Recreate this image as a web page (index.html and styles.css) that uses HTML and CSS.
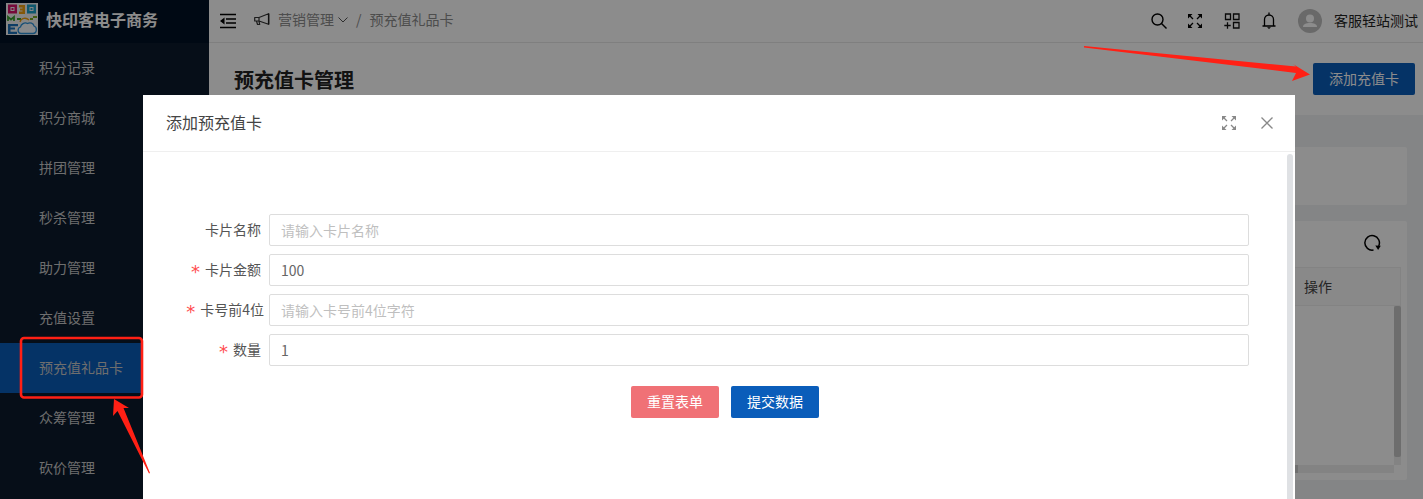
FILE: index.html
```html
<!DOCTYPE html>
<html lang="zh-CN">
<head>
<meta charset="utf-8">
<title>预充值卡管理</title>
<link rel="stylesheet" href="styles.css">
</head>
<body>
<div class="app">
  <aside class="sidebar">
    <div class="brand">
      <svg class="logo" viewBox="0 0 32 32">
        <rect width="32" height="32" fill="#f4f4f4"/>
        <path d="M2 1.500h9v9H2zM4.500 4v4h4V4z" fill="#d8126a" fill-rule="evenodd"/>
        <rect x="5.500" y="5" width="2" height="2" fill="#d8126a"/>
        <path d="M13 2h6v9h-6V8.500h3.500v-1H14V5.500h2.500v-1H13z" fill="#f0a010"/>
        <path d="M21 1.500h9v9h-9zM23.500 4v4h4V4z" fill="#1aa0c8" fill-rule="evenodd"/>
        <rect x="24.500" y="5" width="2" height="2" fill="#1aa0c8"/>
        <path d="M2 18v-4l3 2.500L8 14v4M11 16h4" fill="none" stroke="#3aa030" stroke-width="1.800"/>
        <path d="M24 16h3M27 14h4" fill="none" stroke="#7aa820" stroke-width="1.800"/>
        <path d="M2 21h10v2.200H4.500V24.500H9v2H4.500v2.300H11V31H2z" fill="#1a70b8"/>
        <path d="M15 30.500c-3.500 0-4-5.500-.5-6.500 .5-3 4-5 7-3.500 2.500-1.500 6-.5 6.500 2.500 3.500 1 3 7.500-1 7.500z" fill="#f8fbff" stroke="#2a90d8" stroke-width="1.300"/>
        <path d="M14 19c1-4 6-5 9-2" fill="none" stroke="#f0a010" stroke-width="1.300"/>
      </svg>
      <span class="brand-name">快印客电子商务</span>
    </div>
    <nav class="menu">
      <a class="menu-item">积分记录</a>
      <a class="menu-item">积分商城</a>
      <a class="menu-item">拼团管理</a>
      <a class="menu-item">秒杀管理</a>
      <a class="menu-item">助力管理</a>
      <a class="menu-item">充值设置</a>
      <a class="menu-item active">预充值礼品卡</a>
      <a class="menu-item">众筹管理</a>
      <a class="menu-item">砍价管理</a>
    </nav>
  </aside>
  <div class="main">
    <header class="topbar">
      <svg class="ic ic-fold" viewBox="0 0 16 16"><path d="M0 1.500h16M6 6h10M6 10h10M0 14.500h16" stroke="#000" stroke-width="1.400" fill="none"/><path d="M4.500 4.500v7L0 8z" fill="#000"/></svg>
      <svg class="ic ic-horn" viewBox="0 0 16 14"><path d="M.7 4.500h4.300L14.500.8v10.400L5 8H.7zM5 4.500V8M2.500 8l1 3.500h2.200L5 8.300" fill="none" stroke="#333" stroke-width="1.200" stroke-linejoin="round"/><path d="M14.700.5v11" stroke="#222" stroke-width="1.400"/></svg>
      <span class="crumb">营销管理</span>
      <svg class="ic-chev" viewBox="0 0 10 6"><path d="M.5.5 5 5 9.500.5" fill="none" stroke="#555" stroke-width="1"/></svg>
      <span class="crumb-sep">/</span>
      <span class="crumb">预充值礼品卡</span>
      <div class="top-actions">
        <svg class="ic ic-search" viewBox="0 0 16 16"><circle cx="6.500" cy="6.500" r="5.500" fill="none" stroke="#000" stroke-width="1.400"/><path d="m10.500 10.500 5 5" stroke="#000" stroke-width="1.400"/></svg>
        <svg class="ic ic-full" viewBox="0 0 14 14"><path d="M5 5 2 2M9 5l3-3M5 9l-3 3M9 9l3 3" stroke="#000" stroke-width="1.300" fill="none"/><path d="M0 0h4.500L0 4.500zM14 0H9.500L14 4.500zM0 14h4.500L0 9.500zM14 14H9.500L14 9.500z" fill="#000"/></svg>
        <svg class="ic ic-apps" viewBox="0 0 16 16"><path d="M1.500 1h5v5.500h-5zM9.500 1H15v5.500H9.500zM9.500 9.500H15V15H9.500zM.3 12.500h6.400M3.500 9.300v6.400" fill="none" stroke="#111" stroke-width="1.300"/></svg>
        <svg class="ic ic-bell" viewBox="0 0 14 17"><path d="M.5 14h13M2.500 14V7.500a4.500 4.500 0 0 1 9 0V14M7 3V.5" fill="none" stroke="#000" stroke-width="1.300"/><path d="M5 15.200h4L7 17z" fill="#000"/></svg>
        <svg class="avatar" viewBox="0 0 24 24"><circle cx="12" cy="12" r="12" fill="#bfbfbf"/><circle cx="12" cy="9.500" r="4" fill="#fff"/><path d="M5 18c0-3 3-4 7-4s7 1 7 4z" fill="#fff"/></svg>
        <span class="user">客服轻站测试</span>
      </div>
    </header>
    <section class="page-head">
      <h1 class="page-title">预充值卡管理</h1>
      <button class="btn btn-primary btn-add">添加充值卡</button>
    </section>
    <section class="content">
      <div class="card card-filter"></div>
      <div class="card card-table">
        <div class="table-tools">
          <svg class="ic ic-refresh" viewBox="0 0 18 18"><path d="M10.500 16A7.300 7.300 0 1 1 15.700 12" fill="none" stroke="#000" stroke-width="1.500"/><path d="m12.300 11.500 5.500 .2-2.700 4.300z" fill="#000"/></svg>
        </div>
        <div class="table-wrap">
          <div class="thead"><span class="th">操作</span></div>
          <div class="tbody"><div class="vscroll"><div class="vthumb"></div></div></div>
          <div class="hscroll"><div class="hthumb"></div></div>
        </div>
      </div>
    </section>
  </div>
</div>

<div class="mask"></div>

<div class="modal">
  <div class="modal-head">
    <span class="modal-title">添加预充值卡</span>
    <svg class="modal-ic ic-expand" viewBox="0 0 14 14"><path d="M5 5 2 2M9 5l3-3M5 9l-3 3M9 9l3 3" stroke="#888" stroke-width="1.300" fill="none"/><path d="M0 0h4.500L0 4.500zM14 0H9.500L14 4.500zM0 14h4.500L0 9.500zM14 14H9.500L14 9.500z" fill="#888"/></svg>
    <svg class="modal-ic ic-close" viewBox="0 0 12 12"><path d="M.5.500l11 11M11.500.500l-11 11" stroke="#888" stroke-width="1.300"/></svg>
  </div>
  <div class="modal-body">
    <form class="form">
      <div class="row">
        <label class="label">卡片名称</label>
        <input class="input" placeholder="请输入卡片名称">
      </div>
      <div class="row">
        <label class="label"><i class="req">*</i>卡片金额</label>
        <input class="input" value="100">
      </div>
      <div class="row">
        <label class="label label-wide"><i class="req">*</i>卡号前4位</label>
        <input class="input" placeholder="请输入卡号前4位字符">
      </div>
      <div class="row">
        <label class="label"><i class="req">*</i>数量</label>
        <input class="input" value="1">
      </div>
      <div class="form-actions">
        <button type="button" class="btn btn-reset">重置表单</button>
        <button type="button" class="btn btn-submit">提交数据</button>
      </div>
    </form>
    <div class="modal-scroll"></div>
  </div>
</div>

<svg class="annot" viewBox="0 0 1423 499">
  <path d="M1084 46 1296 66.500 1293 64 1310 74.500 1292 81 1296 73 1084 47.500Z" fill="#ff2015"/>
  <rect x="21" y="338" width="121" height="59.500" rx="3" fill="none" stroke="#ff2015" stroke-width="2.600"/>
  <path d="M114 399 129 408 123.500 408 150 473 149 473.500 117.500 411 113 416Z" fill="#ff2015"/>
</svg>
</body>
</html>
```
FILE: styles.css
```css
* { box-sizing: border-box; }
html, body { margin: 0; height: 100%; overflow: hidden; }
body {
  font-family: "Noto Sans CJK SC", "Liberation Sans", sans-serif;
  font-size: 14px;
  color: #333;
  background: #f0f2f5;
}
.app { display: flex; height: 100vh; }

.sidebar { width: 209px; flex: none; background: #0b1a2c; overflow: hidden; }
.brand { height: 43px; display: flex; align-items: center; padding: 0 6px 5px; gap: 8px; background: #001126; }
.logo { width: 32px; height: 32px; flex: none; }
.brand-name { font-size: 16px; font-weight: 700; color: #fff; line-height: 32px; }
.menu { display: flex; flex-direction: column; }
.menu-item { height: 50px; line-height: 48px; padding-left: 39px; color: #c8c8c8; }
.menu-item.active { background: #0a5dba; }

.main { flex: 1; min-width: 0; display: flex; flex-direction: column; }
.topbar {
  height: 43px; flex: none; display: flex; align-items: center;
  background: #fff; border-bottom: 1px solid #e8e8e8; padding: 0 5px 1px 11px;
  color: #8c8c8c;
}
.ic { display: block; flex: none; }
.ic-fold { width: 16px; height: 16px; margin-right: 18px; }
.ic-horn { width: 16px; height: 14px; margin: 0 8px 1px 0; }
.crumb { line-height: 20px; padding-bottom: 3px; }
.ic-chev { width: 10px; height: 6px; margin: 0 8px 1px 4px; flex: none; }
.crumb-sep { margin: 0 8px 0 0; padding-bottom: 3px; }
.top-actions { margin-left: auto; display: flex; align-items: center; color: #222; }
.ic-search { width: 16px; height: 16px; margin-right: 21px; }
.ic-full { width: 14px; height: 14px; margin-right: 22px; }
.ic-apps { width: 16px; height: 16px; margin-right: 22px; }
.ic-bell { width: 14px; height: 17px; margin-right: 22px; }
.avatar { width: 24px; height: 24px; margin-right: 12px; flex: none; }
.user { padding-bottom: 2px; }

.page-head {
  height: 72px; flex: none; background: #fff;
  display: flex; justify-content: space-between; align-items: flex-start;
  padding: 20px 8px 0 25px;
}
.page-title { margin: 3px 0 0; font-size: 20px; font-weight: 700; line-height: 28px; color: #222; }

.btn {
  border: 0; border-radius: 2px; color: #fff; height: 32px; padding: 0 16px 2px;
  font: inherit; font-size: 14px; cursor: pointer;
}
.btn-primary { background: #0a5dba; }
.btn-add { color: #fff; }

.content { flex: 1; min-height: 0; padding: 32px 16px 0; display: flex; flex-direction: column; gap: 16px; }
.card { background: #fff; border-radius: 2px; }
.card-filter { height: 58px; flex: none; }
.card-table { height: 259px; flex: none; padding: 0 6px; }
.table-tools { height: 46px; display: flex; justify-content: flex-end; align-items: flex-start; padding: 13px 20px 0 0; }
.ic-refresh { width: 18px; height: 18px; }
.table-wrap { position: relative; }
.thead { height: 39px; background: #fafafa; border: 1px solid #eee; display: flex; justify-content: flex-end; align-items: center; padding-right: 68px; }
.th { color: #444; line-height: 20px; padding-bottom: 2px; }
.tbody { height: 159px; display: flex; justify-content: flex-end; background: #fff; }
.vscroll { width: 7px; background: #efefef; }
.vthumb { height: 151px; background: #c6c6c6; border-radius: 2px; }
.hscroll { height: 8px; margin-right: 7px; background: #eee; display: flex; justify-content: flex-end; }
.hthumb { width: 100px; margin-right: 96px; background: #ccc; }

.mask { position: fixed; inset: 0; background: rgba(0, 0, 0, .45); }

.modal {
  position: fixed; left: 143px; top: 95px; width: 1152px; height: 420px;
  background: #fff; display: flex; flex-direction: column;
}
.modal-head {
  height: 57px; flex: none; display: flex; align-items: center;
  padding: 0 22px 0 23px; border-bottom: 1px solid #efefef;
}
.modal-title { font-size: 16px; line-height: 24px; padding-bottom: 2px; color: #444; margin-right: auto; }
.modal-ic { display: block; flex: none; }
.ic-expand { width: 14px; height: 14px; margin-right: 25px; }
.ic-close { width: 12px; height: 12px; }
.modal-body { flex: 1; display: flex; min-height: 0; padding: 2px 2px 0 0; }
.form { flex: 1; display: flex; flex-direction: column; gap: 8px; padding: 60px 38px 0 0; }
.row { display: flex; align-items: center; height: 32px; }
.label { width: 118px; flex: none; text-align: right; color: #555; white-space: nowrap; padding-bottom: 2px; }
.label-wide { width: 121px; }
.row .label { margin-right: 8px; }
.row .label-wide { margin-right: 5px; }
.req { font-style: normal; font-weight: 400; color: #ff4d4f; margin-right: 5px; font-size: 18px; line-height: 14px; font-family: "DejaVu Sans", sans-serif; vertical-align: -3px; }
.input {
  flex: 1; min-width: 0; height: 32px; border: 1px solid #ddd; border-radius: 2px;
  padding: 0 11px; font: inherit; font-size: 14px; color: #666; background: #fff; outline: 0;
}
.input::placeholder { color: #bfbfbf; }
.form-actions { display: flex; justify-content: center; gap: 12px; margin-top: 12px; padding-left: 58px; }
.btn-reset { background: #f07176; width: 88px; padding: 0 0 2px; }
.btn-submit { background: #0a5dba; width: 88px; padding: 0 0 2px; }
.modal-scroll { width: 6px; flex: none; background: #dfe1e4; border-radius: 3px 3px 0 0; }

.annot { position: fixed; inset: 0; width: 1423px; height: 499px; pointer-events: none; }
```
